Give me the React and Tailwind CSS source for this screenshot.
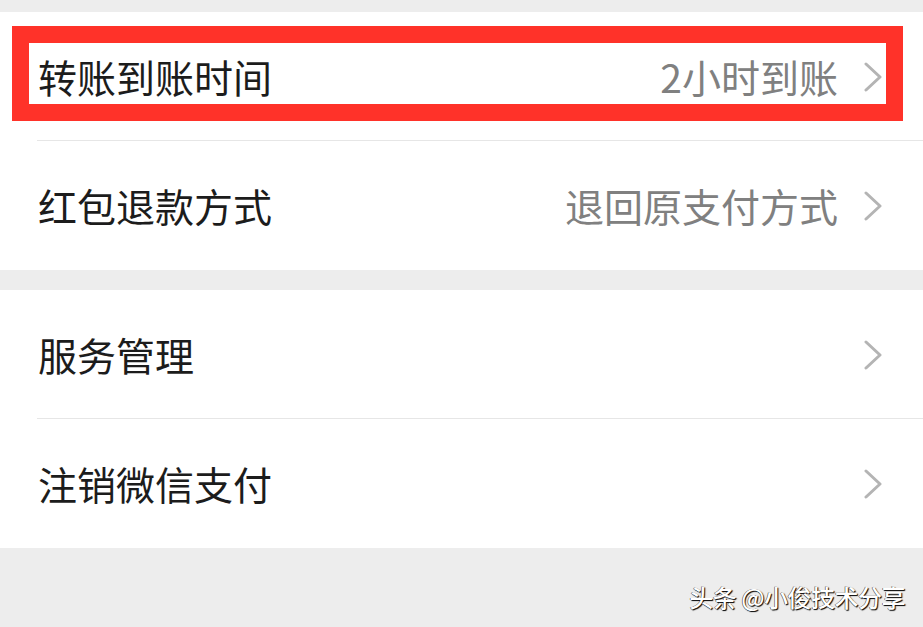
import React from "react";

const Chevron = () => (
  <svg width="18" height="30" viewBox="0 0 18 30" className="shrink-0">
    <polyline points="2,2 16,15 2,28" fill="none" stroke="#b4b4b4" strokeWidth="3" strokeLinecap="round" strokeLinejoin="round" />
  </svg>
);

const Row = ({ label, value, divider }) => (
  <div className="relative flex h-[129px] items-center pl-[38px] pr-[41px]">
    <span className="flex-1 text-[39px] text-[#1c1c1c]">{label}</span>
    {value && <span className="mr-[26px] text-[39px] text-[#808080]">{value}</span>}
    <Chevron />
    {divider && <div className="absolute bottom-0 left-[37px] right-0 h-px bg-[#e6e6e6]" />}
  </div>
);

export default function App() {
  return (
    <div
      className="relative h-[627px] w-[923px] overflow-hidden bg-[#ededed]"
      style={{ fontFamily: '"Noto Sans CJK SC", "Noto Sans", sans-serif' }}
    >
      <div className="h-[12px]" />
      <div className="bg-white">
        <Row label="转账到账时间" value="2小时到账" divider />
        <Row label="红包退款方式" value="退回原支付方式" />
      </div>
      <div className="h-[20px]" />
      <div className="bg-white">
        <Row label="服务管理" divider />
        <Row label="注销微信支付" />
      </div>

      {/* red annotation box */}
      <div className="absolute left-[12px] top-[26px] h-[95px] w-[891px] border-[17px] border-[#ff3229]" />

      <div
        className="absolute right-[18px] top-[579px] text-[24px] font-medium tracking-[-0.5px] text-white"
        style={{ textShadow: "1px 1px 1px #000, -0.5px -0.5px 0 #333" }}
      >
        头条 @小俊技术分享
      </div>
    </div>
  );
}
